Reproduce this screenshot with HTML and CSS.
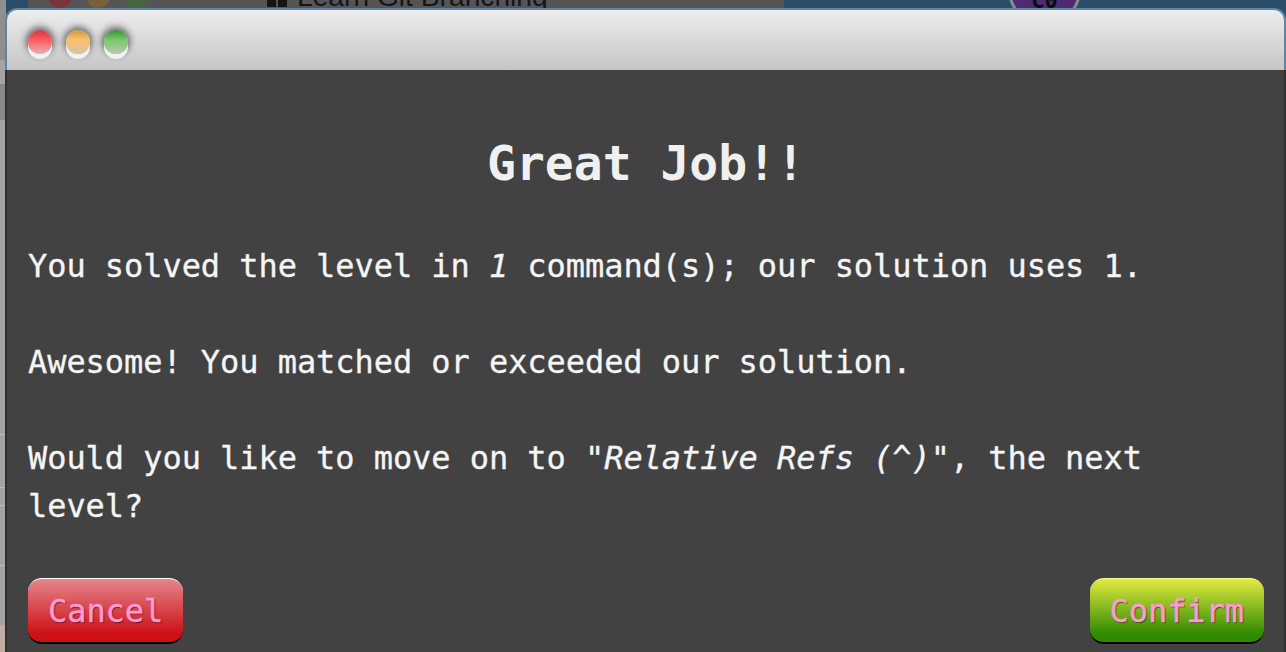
FILE: index.html
```html
<!DOCTYPE html>
<html lang="en">
<head>
<meta charset="utf-8">
<title>Great Job!!</title>
<link rel="stylesheet" href="styles.css">
</head>
<body>
<div class="backdrop">
  <div class="edge">
    <div class="edge-top"></div>
    <div class="edge-panel"></div>
    <div class="edge-rule edge-rule-a"></div>
    <div class="edge-rule edge-rule-b"></div>
    <div class="edge-rule edge-rule-c"></div>
    <div class="edge-rule edge-rule-d"></div>
    <div class="edge-pink"></div>
  </div>
  <div class="rear-blue"></div>
  <div class="rear-window">
    <span class="rear-light rear-red"></span>
    <span class="rear-light rear-amber"></span>
    <span class="rear-light rear-green"></span>
    <span class="rear-title"><span class="rear-icon"><i></i><i></i></span>Learn Git Branching</span>
  </div>
  <div class="rear-canvas"><span class="node">C0</span></div>
</div>

<main class="window">
  <header class="titlebar">
    <span class="light light-red"></span>
    <span class="light light-amber"></span>
    <span class="light light-green"></span>
  </header>
  <section class="content">
    <h2 class="heading">Great Job!!</h2>
    <p class="para">You solved the level in <em>1</em> command(s); our solution uses 1.</p>
    <p class="para">Awesome! You matched or exceeded our solution.</p>
    <p class="para">Would you like to move on to <em>"Relative Refs (^)"</em>, the next level?</p>
    <div class="actions">
      <button class="btn btn-cancel" type="button">Cancel</button>
      <button class="btn btn-confirm" type="button">Confirm</button>
    </div>
  </section>
</main>
</body>
</html>
```
FILE: styles.css
```css
html, body {
  margin: 0;
  height: 100%;
  overflow: hidden;
  background: #555;
}

.backdrop {
  position: absolute;
  inset: 0;
  display: flex;
  overflow: hidden;
}

.edge {
  position: relative;
  flex: 0 0 6px;
  background: #a4a4a4;
}
.edge-top {
  position: absolute;
  top: 0;
  left: 0;
  right: 0;
  height: 60px;
  background: #8f8f8f;
}
.edge-panel {
  position: absolute;
  top: 84px;
  left: 0;
  right: 0;
  height: 36px;
  background: #888;
}
.edge-rule {
  position: absolute;
  left: 0;
  right: 0;
  height: 1px;
  background: #bdbdbd;
}
.edge-rule-a { top: 434px; }
.edge-rule-b { top: 487px; }
.edge-rule-c { top: 505px; }
.edge-rule-d { top: 565px; }
.edge-pink {
  position: absolute;
  left: 0;
  right: 0;
  top: 625px;
  bottom: 0;
  background: #c4aca4;
}

.rear-blue {
  flex: 0 0 22px;
  background: #2a4d69;
}

.rear-window {
  position: relative;
  flex: 0 0 756px;
  background: #555;
  box-shadow: 8px 0 10px #3a4a55;
}
.rear-light {
  position: absolute;
  top: -16px;
  width: 24px;
  height: 24px;
  border-radius: 50%;
}
.rear-red { left: 20px; background: #7a3438; }
.rear-amber { left: 58px; background: #7a5f3c; }
.rear-green { left: 96px; background: #48663e; }
.rear-title {
  position: absolute;
  left: 239px;
  top: -20px;
  display: flex;
  align-items: center;
  white-space: nowrap;
  font: 28.2px/32px "Liberation Sans", sans-serif;
  color: #151515;
}
.rear-icon {
  display: flex;
  gap: 2px;
  margin-right: 10px;
}
.rear-icon i {
  display: block;
  width: 9px;
  height: 22px;
  background: #151515;
}

.rear-canvas {
  position: relative;
  flex: 1;
  background: #2a4d69;
}
.node {
  position: absolute;
  left: 224px;
  top: -47px;
  width: 67px;
  height: 67px;
  border: 3px solid #8a8a8a;
  border-radius: 50%;
  background: #4f2a70;
  color: #0c0c0c;
  text-align: center;
  font: 700 22px/89px "DejaVu Sans Mono", monospace;
}

.window {
  position: absolute;
  top: 8px;
  left: 5px;
  right: 0;
  bottom: 0;
  display: flex;
  flex-direction: column;
  overflow: hidden;
  font-family: "DejaVu Sans Mono", "Liberation Mono", monospace;
}

.titlebar {
  box-sizing: border-box;
  flex: 0 0 62px;
  display: flex;
  align-items: flex-start;
  gap: 14px;
  padding: 20px 0 0 21px;
  border: 2px solid #5c86a8;
  border-bottom: 0;
  border-radius: 12px 12px 0 0;
  background: linear-gradient(#ededed, #c6c6c6);
}

.light {
  width: 24px;
  height: 24px;
  border-radius: 50%;
  box-shadow: 0 5px 0 #f2f2f2, 0 -1px 7px 2px rgba(0, 0, 0, .55);
}
.light-red { background: linear-gradient(#cf3a44, #fb5a60 40%, #e9b0b0); }
.light-amber { background: linear-gradient(#cf9648, #fbbf6c 40%, #d8c4a8); }
.light-green { background: linear-gradient(#3a8c3a, #78c868 40%, #b9c9b2); }

.content {
  flex: 1;
  display: flex;
  flex-direction: column;
  padding: 63px 20px 0 21px;
  border: 2px solid #303030;
  border-width: 0 2px;
  background: #424242;
  color: #f5f5f5;
}

.heading {
  margin: 0 0 48px;
  text-align: center;
  font-size: 48px;
  line-height: 61px;
  font-weight: 700;
  color: #f0f0f0;
}

.para {
  margin: 0 0 48px;
  font-size: 32px;
  line-height: 48px;
  letter-spacing: -0.06px;
  -webkit-text-stroke: 0.3px #f5f5f5;
}

.actions {
  display: flex;
  justify-content: space-between;
}

.btn {
  height: 66px;
  padding: 0 20px;
  border: 0;
  border-top: 1px solid #fff;
  border-bottom: 2px solid #000;
  border-radius: 14px;
  font: 32px/1 "DejaVu Sans Mono", monospace;
  letter-spacing: -0.06px;
  color: #ff9ad5;
  -webkit-text-stroke: 0.4px #ff9ad5;
  text-shadow: 1px 1px 1px rgba(0, 0, 0, .55);
}
.btn-cancel { background: linear-gradient(#e5858c, #cc1014 88%); }
.btn-confirm { background: linear-gradient(#e2ea42, #2f8a00 88%); border-top-color: #f6fa90; }
```
